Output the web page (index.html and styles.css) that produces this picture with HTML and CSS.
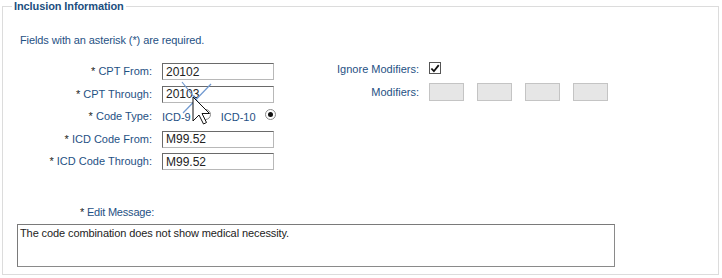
FILE: index.html
```html
<!DOCTYPE html>
<html>
<head>
<meta charset="utf-8">
<link rel="stylesheet" href="styles.css">
</head>
<body>
<fieldset class="panel">
  <legend class="panel-title">Inclusion Information</legend>
  <p class="note">Fields with an asterisk (*) are required.</p>
  <div class="columns">
    <div class="form-left">
      <label class="lbl"><span class="req">*</span> CPT From:</label>
      <div class="field"><input class="txt" type="text" value="20102"></div>
      <label class="lbl"><span class="req">*</span> CPT Through:</label>
      <div class="field"><input class="txt" type="text" value="20103"></div>
      <label class="lbl"><span class="req">*</span> Code Type:</label>
      <div class="field radios">
        <span class="opt">ICD-9</span><span class="radio"></span>
        <span class="opt">ICD-10</span><span class="radio on"></span>
      </div>
      <label class="lbl"><span class="req">*</span> ICD Code From:</label>
      <div class="field"><input class="txt" type="text" value="M99.52"></div>
      <label class="lbl"><span class="req">*</span> ICD Code Through:</label>
      <div class="field"><input class="txt" type="text" value="M99.52"></div>
    </div>
    <div class="form-right">
      <label class="lbl">Ignore Modifiers:</label>
      <div class="field"><span class="check"><svg width="11" height="11" viewBox="0 0 11 11"><path d="M1.5 5.5 L4.3 8.5 L9.6 1.8" fill="none" stroke="#111" stroke-width="2"/></svg></span></div>
      <label class="lbl">Modifiers:</label>
      <div class="field mods"><span class="mod"></span><span class="mod"></span><span class="mod"></span><span class="mod"></span></div>
    </div>
  </div>
  <div class="edit">
    <div class="edit-lbl"><span class="req">*</span> Edit Message:</div>
    <div class="area">The code combination does not show medical necessity.</div>
  </div>
  <svg class="cursor" width="40" height="52" viewBox="0 0 40 52">
    <line x1="6" y1="6" x2="26" y2="31" stroke="#6f98d0" stroke-width="1.2"/>
    <line x1="35" y1="8" x2="7" y2="37" stroke="#6f98d0" stroke-width="1.2"/>
    <path d="M17 21 L17 45 L23 39 L27.5 48 L30.5 46.5 L26 37.5 L33.5 37.5 Z" fill="#fff" stroke="#111" stroke-width="1" stroke-linejoin="miter"/>
  </svg>
</fieldset>
</body>
</html>
```
FILE: styles.css
```css
html, body {
  margin: 0;
  padding: 0;
  background: #fff;
}
body {
  font-family: "Liberation Sans", Arial, sans-serif;
  font-size: 11px;
  color: #1f5184;
}
.panel {
  position: relative;
  margin: 0 3px 0 2px;
  padding: 0;
  height: 275px;
  box-sizing: border-box;
  border: 1px solid #dcdcdc;
}
.panel-title {
  margin-left: 9px;
  padding: 0 2px;
  font-size: 11px;
  font-weight: bold;
  line-height: 12px;
  letter-spacing: -0.1px;
  color: #1c4f80;
}
.note {
  margin: 22px 0 0 17px;
  line-height: 13px;
  letter-spacing: -0.1px;
}
.columns {
  display: flex;
  margin-top: 16px;
}
.form-left {
  display: grid;
  grid-template-columns: 149px 112px;
  grid-auto-rows: 17px;
  row-gap: 5.5px;
  column-gap: 10px;
  align-items: center;
}
.form-right {
  display: grid;
  grid-template-columns: 145px auto;
  grid-template-rows: 13px 18px;
  row-gap: 7px;
  column-gap: 10px;
  align-items: center;
}
.lbl {
  text-align: right;
  white-space: nowrap;
  line-height: 13px;
}
.req {
  color: #222;
}
.field {
  display: flex;
  align-items: center;
}
.txt {
  width: 112px;
  height: 17px;
  box-sizing: border-box;
  margin: 0;
  padding: 0 3px;
  border: 1px solid;
  border-color: #6a6a6a #b8b8b8 #b8b8b8 #6a6a6a;
  font-family: "Liberation Sans", Arial, sans-serif;
  font-size: 12px;
  color: #222;
  background: #fff;
}
.radios {
  white-space: nowrap;
}
.opt {
  flex-shrink: 0;
  line-height: 13px;
  margin-top: 2px;
}
.radio {
  flex-shrink: 0;
  width: 11px;
  height: 11px;
  box-sizing: border-box;
  border: 1px solid #8a8a8a;
  border-radius: 50%;
  background: #fff;
  margin: -4px 10px 0 9px;
  position: relative;
}
.radio.on::after {
  content: "";
  position: absolute;
  left: 2px;
  top: 2px;
  width: 5px;
  height: 5px;
  border-radius: 50%;
  background: #111;
}
.check {
  width: 12px;
  height: 12px;
  box-sizing: border-box;
  border: 1px solid #555;
  background: #fff;
  display: flex;
  align-items: center;
  justify-content: center;
  margin-top: -3px;
}
.check svg {
  display: block;
}
.mods {
  gap: 13px;
}
.mod {
  width: 35px;
  height: 18px;
  box-sizing: border-box;
  border: 1px solid #c4c4c4;
  background: #e6e6e6;
}
.edit {
  margin-top: 36px;
}
.edit-lbl {
  width: 151px;
  text-align: right;
  line-height: 13px;
  letter-spacing: -0.2px;
}
.area {
  margin: 5px 0 0 14px;
  width: 598px;
  height: 43px;
  box-sizing: border-box;
  border: 1px solid;
  border-color: #7a7a7a #8a8a8a #8a8a8a #7a7a7a;
  padding: 2px 2px;
  color: #222;
  font-size: 11px;
  line-height: 13px;
  letter-spacing: -0.1px;
}
.cursor {
  position: absolute;
  left: 173px;
  top: 64px;
}
```
